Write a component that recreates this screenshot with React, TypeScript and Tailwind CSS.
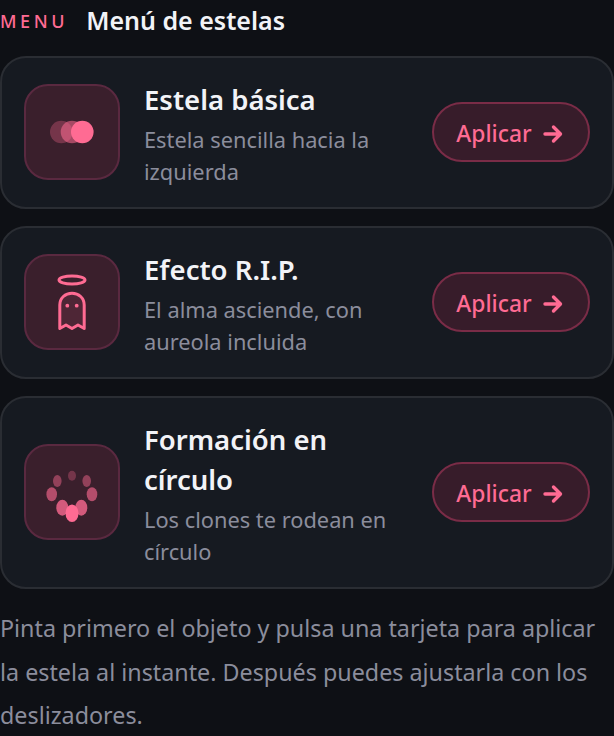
const font = { fontFamily: '"Noto Sans", sans-serif' };

function TrailIcon() {
  return (
    <svg width="46" height="24" viewBox="0 0 46 24" aria-hidden="true">
      <circle cx="12.3" cy="12" r="11.3" fill="#ff6b93" fillOpacity="0.3" />
      <circle cx="23" cy="12" r="11.3" fill="#ff6b93" fillOpacity="0.55" />
      <circle cx="33.3" cy="12" r="11.3" fill="#ff6b93" />
    </svg>
  );
}

function GhostIcon() {
  return (
    <svg width="32" height="58" viewBox="0 0 32 58" fill="none" stroke="#ff6b93" aria-hidden="true">
      <ellipse cx="16" cy="7" rx="13" ry="4" strokeWidth="3" />
      <path
        d="M3.8 55.5 V32 C3.8 25 9.2 20.2 16 20.2 C22.8 20.2 28.2 25 28.2 32 V55.5 L22 52 L16 55.5 L10 52 Z"
        fill="#ff6b93"
        fillOpacity="0.1"
        strokeWidth="3"
        strokeLinejoin="round"
      />
      <circle cx="11.3" cy="32.7" r="1.9" fill="#ff6b93" stroke="none" />
      <circle cx="20.7" cy="32.7" r="1.9" fill="#ff6b93" stroke="none" />
    </svg>
  );
}

function CircleIcon() {
  const dots = [
    [32, 15.7, 4, 5, 0.3],
    [17.3, 21, 4.3, 6, 0.45],
    [46.7, 21, 4.3, 6, 0.45],
    [11.7, 34.3, 5.3, 7, 0.62],
    [52, 34.3, 5.3, 7, 0.62],
    [22.3, 47.7, 6, 8, 0.78],
    [41.3, 47.7, 6, 8, 0.78],
    [32, 53.3, 6.5, 8.8, 1],
  ];
  return (
    <svg width="64" height="64" viewBox="0 0 64 64" aria-hidden="true">
      {dots.map(([cx, cy, rx, ry, o], i) => (
        <ellipse key={i} cx={cx} cy={cy} rx={rx} ry={ry} fill="#ff6b93" fillOpacity={o} />
      ))}
    </svg>
  );
}

function Card({ icon, title, sub }: { icon: React.ReactNode; title: string; sub: string }) {
  return (
    <div className="flex items-center gap-6 rounded-[26px] border-2 border-[#2a2d33] bg-[#161a21] px-[22px] pt-[21.5px] pb-[19.5px]">
      <div className="mb-1 flex h-24 w-24 shrink-0 items-center justify-center rounded-[24px] border-2 border-[#5a2940] bg-[#3a1f2c]">
        {icon}
      </div>
      <div className="flex min-w-0 flex-1 flex-col gap-1">
        <div className="text-[27.5px] leading-10 font-semibold text-[#f2f3f7]">{title}</div>
        <div className="text-[21.8px] leading-8 text-[#8b8d9c]">{sub}</div>
      </div>
      <button className="mb-1 flex h-[60px] w-[158px] shrink-0 items-center justify-center gap-[11px] rounded-full border-2 border-[#7a2c47] bg-[#371c2a] pt-[5px] pr-[3px] text-[22.8px] font-medium text-[#ff6b93]">
        Aplicar
        <svg width="20" height="20" viewBox="0 0 20 20" fill="none" stroke="#ff6b93" strokeWidth="3.4" strokeLinecap="round" strokeLinejoin="round" aria-hidden="true">
          <path d="M2 10 H17 M10.5 3 L17.5 10 L10.5 17" />
        </svg>
      </button>
    </div>
  );
}

export default function App() {
  return (
    <div className="h-[736px] w-[614px] overflow-hidden bg-[#0e1015]" style={font}>
      <div className="flex h-14 items-center gap-[18px] pb-[14px]">
        <span className="text-[18px] font-medium tracking-[0.2em] text-[#ff6b93]">MENU</span>
        <span className="text-[25px] font-semibold text-[#f2f3f7]">Menú de estelas</span>
      </div>
      <div className="flex flex-col gap-[17px]">
        <Card icon={<TrailIcon />} title="Estela básica" sub="Estela sencilla hacia la izquierda" />
        <Card icon={<GhostIcon />} title="Efecto R.I.P." sub="El alma asciende, con aureola incluida" />
        <Card icon={<CircleIcon />} title="Formación en círculo" sub="Los clones te rodean en círculo" />
      </div>
      <p className="mt-[18px] text-[23.3px] leading-[43.5px] text-[#8b8d9c]">
        Pinta primero el objeto y pulsa una tarjeta para aplicar la estela al instante. Después puedes ajustarla con los deslizadores.
      </p>
    </div>
  );
}
